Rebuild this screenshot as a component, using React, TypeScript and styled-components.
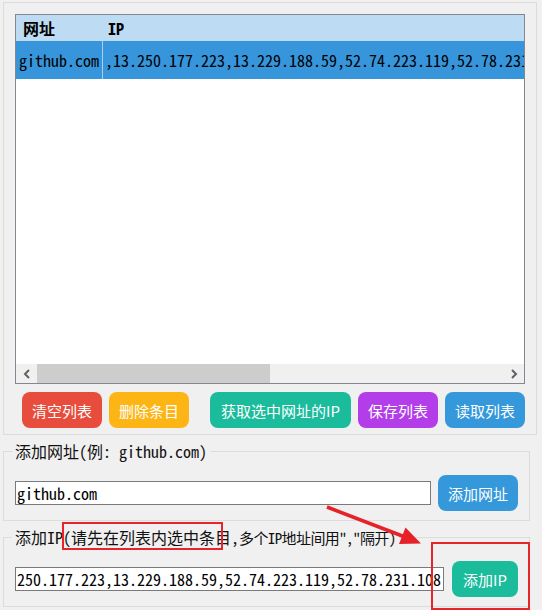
import React from "react";
import styled, { createGlobalStyle } from "styled-components";

const MONO = `"Noto Sans Mono CJK SC", "Liberation Mono", "Noto Sans CJK SC", monospace`;
const SANS = `"Noto Sans CJK SC", "Noto Sans", sans-serif`;

const Global = createGlobalStyle`
  html, body { margin: 0; padding: 0; background: #f0f0f0; }
  body { font-family: ${MONO}; color: #000; }
  * { box-sizing: border-box; }
`;

const Page = styled.div`
  position: relative;
  width: 542px;
  height: 610px;
  overflow: hidden;
  background: #f0f0f0;
  padding-top: 2px;
`;

const TopGroup = styled.div`
  margin: 0 5px 0 3px;
  border: 1px solid #dcdcdc;
  padding: 11px 11px 6px 11px;
  display: flex;
  flex-direction: column;
  gap: 8px;
`;

const List = styled.div`
  height: 370px;
  border: 1px solid #828790;
  background: #fff;
  display: flex;
  flex-direction: column;
  overflow: hidden;
`;

const HeaderRow = styled.div`
  display: grid;
  grid-template-columns: 87px 1fr;
  height: 26px;
  background: #bddcf3;
  align-items: center;
  font-weight: bold;
  font-size: 16px;
`;

const HeaderCell = styled.div<{ $pad: number }>`
  padding-left: ${(p) => p.$pad}px;
  white-space: nowrap;
`;

const DataRow = styled.div`
  display: grid;
  grid-template-columns: 87px 1fr;
  height: 38px;
  background: #3795db;
  align-items: stretch;
  font-size: 16px;
  color: #000;
`;

const DataCell = styled.div<{ $pad: number; $sep?: boolean }>`
  display: flex;
  align-items: center;
  padding-left: ${(p) => p.$pad}px;
  white-space: nowrap;
  overflow: hidden;
  border-right: ${(p) => (p.$sep ? "1px solid #a9d0ef" : "none")};
`;

const Filler = styled.div`
  flex: 1;
  background: #fff;
`;

const HScroll = styled.div`
  height: 19px;
  display: flex;
  align-items: stretch;
  background: #f0f0f0;
`;

const ScrollArrow = styled.div`
  width: 21px;
  display: flex;
  align-items: center;
  justify-content: center;
`;

const Track = styled.div`
  flex: 1;
  display: flex;
  align-items: stretch;
`;

const Thumb = styled.div`
  width: 233px;
  background: #cdcdcd;
`;

const ButtonRow = styled.div`
  display: flex;
  gap: 7px;
  padding-left: 7px;
`;

const FlatButton = styled.button<{ $bg: string; $w: number; $lead?: number }>`
  width: ${(p) => p.$w}px;
  height: 36px;
  border: none;
  border-radius: 8px;
  background: ${(p) => p.$bg};
  color: #fff;
  font-family: ${SANS};
  font-size: 15px;
  padding: 0;
  margin-left: ${(p) => p.$lead ?? 0}px;
  cursor: pointer;
  flex: none;
`;

const Group = styled.fieldset<{ $right: number }>`
  margin: 6px ${(p) => p.$right}px 0 3px;
  border: 1px solid #dcdcdc;
  padding: 14px 11px 9px 11px;
  min-width: 0;
`;

const Legend = styled.legend`
  padding: 0 3px;
  margin-left: -3px;
  line-height: 20px;
  height: 20px;
  font-size: 16px;
  color: #111;
  white-space: nowrap;
`;

const LegendTail = styled.span`
  font-size: 15px;
  letter-spacing: -0.6px;
`;

const InputRow = styled.div<{ $gap: number }>`
  display: flex;
  align-items: center;
  gap: ${(p) => p.$gap}px;
`;

const TextInput = styled.input<{ $w: number }>`
  width: ${(p) => p.$w}px;
  height: 24px;
  border: 1px solid #7a7a7a;
  background: #fff;
  font-family: ${MONO};
  font-size: 16px;
  padding: 0 0 0 1px;
  color: #000;
  outline: none;
  flex: none;
`;

const Highlight = styled.div<{ $x: number; $y: number; $w: number; $h: number }>`
  position: absolute;
  left: ${(p) => p.$x}px;
  top: ${(p) => p.$y}px;
  width: ${(p) => p.$w}px;
  height: ${(p) => p.$h}px;
  border: 2px solid #e8232c;
  pointer-events: none;
`;

const ArrowLayer = styled.svg`
  position: absolute;
  left: 320px;
  top: 500px;
  width: 110px;
  height: 50px;
  pointer-events: none;
`;

const Chevron = ({ dir }: { dir: "left" | "right" }) => (
  <svg width="8" height="10" viewBox="0 0 8 10">
    <polyline
      points={dir === "left" ? "6,1 2,5 6,9" : "2,1 6,5 2,9"}
      fill="none"
      stroke="#606060"
      strokeWidth="2"
    />
  </svg>
);

export default function App() {
  return (
    <Page>
      <Global />
      <TopGroup>
        <List>
          <HeaderRow>
            <HeaderCell $pad={7}>网址</HeaderCell>
            <HeaderCell $pad={5}>IP</HeaderCell>
          </HeaderRow>
          <DataRow>
            <DataCell $pad={3} $sep>github.com</DataCell>
            <DataCell $pad={2}>,13.250.177.223,13.229.188.59,52.74.223.119,52.78.231.108</DataCell>
          </DataRow>
          <Filler />
          <HScroll>
            <ScrollArrow>
              <Chevron dir="left" />
            </ScrollArrow>
            <Track>
              <Thumb />
            </Track>
            <ScrollArrow>
              <Chevron dir="right" />
            </ScrollArrow>
          </HScroll>
        </List>
        <ButtonRow>
          <FlatButton $bg="#e74c3c" $w={80}>清空列表</FlatButton>
          <FlatButton $bg="#fdb515" $w={80}>删除条目</FlatButton>
          <FlatButton $bg="#1abc9c" $w={141} $lead={14}>获取选中网址的IP</FlatButton>
          <FlatButton $bg="#b33de9" $w={80}>保存列表</FlatButton>
          <FlatButton $bg="#3498db" $w={80}>读取列表</FlatButton>
        </ButtonRow>
      </TopGroup>

      <Group $right={12}>
        <Legend>添加网址(例: github.com)</Legend>
        <InputRow $gap={7}>
          <TextInput $w={416} defaultValue="github.com" />
          <FlatButton $bg="#3498db" $w={80}>添加网址</FlatButton>
        </InputRow>
      </Group>

      <Group $right={12}>
        <Legend>
          添加IP(请先在列表内选中条目,<LegendTail>多个IP地址间用","隔开)</LegendTail>
        </Legend>
        <InputRow $gap={8}>
          <TextInput $w={429} defaultValue="250.177.223,13.229.188.59,52.74.223.119,52.78.231.108" />
          <FlatButton $bg="#1abc9c" $w={66}>添加IP</FlatButton>
        </InputRow>
      </Group>

      <Highlight $x={62} $y={522} $w={161} $h={28} />
      <Highlight $x={431} $y={542} $w={99} $h={68} />
      <ArrowLayer viewBox="0 0 110 50">
        <line x1="7" y1="7" x2="85" y2="37" stroke="#e62129" strokeWidth="3.5" />
        <polygon points="101,43.5 85.5,27.5 79,44" fill="#e62129" />
      </ArrowLayer>
    </Page>
  );
}
